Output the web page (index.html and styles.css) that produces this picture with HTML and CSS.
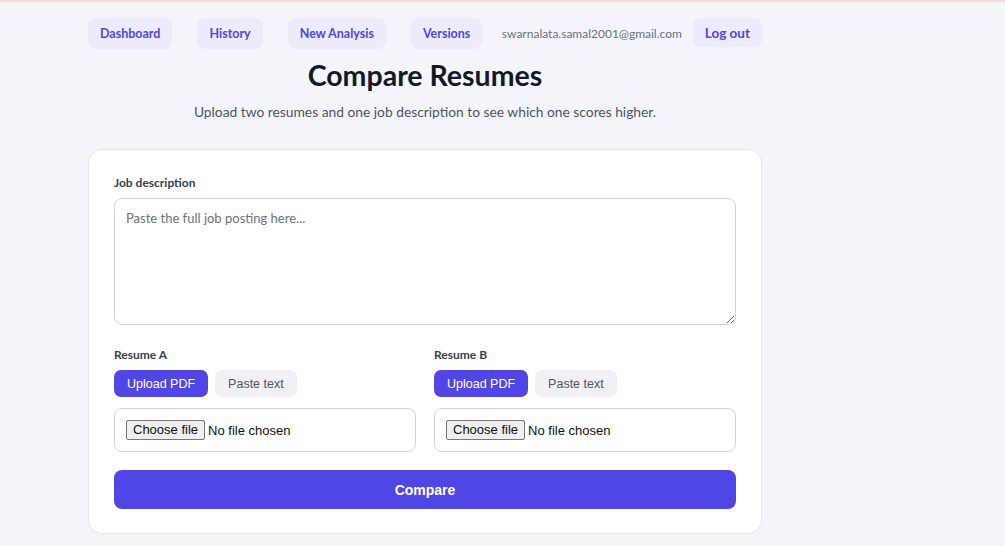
FILE: index.html
```html
<!DOCTYPE html>
<html lang="en">
<head>
  <meta charset="UTF-8">
  <meta name="viewport" content="width=device-width, initial-scale=1.0">
  <title>Compare Resumes</title>
  <link rel="stylesheet" href="styles.css">
</head>
<body>
  <div class="page">
    <!-- Top navigation -->
    <nav class="topbar">
      <div class="nav-links">
        <a class="nav-btn" href="#">Dashboard</a>
        <a class="nav-btn" href="#">History</a>
        <a class="nav-btn" href="#">New Analysis</a>
        <a class="nav-btn" href="#">Versions</a>
      </div>
      <div class="account">
        <span class="email">swarnalata.samal2001@gmail.com</span>
        <button class="logout">Log out</button>
      </div>
    </nav>

    <header class="heading">
      <h1>Compare Resumes</h1>
      <p>Upload two resumes and one job description to see which one scores higher.</p>
    </header>

    <!-- Compare form -->
    <form class="card">
      <label class="field-label" for="jd">Job description</label>
      <textarea id="jd" placeholder="Paste the full job posting here..."></textarea>

      <div class="resumes">
        <div class="resume">
          <div class="field-label">Resume A</div>
          <div class="toggle">
            <button type="button" class="tab active">Upload PDF</button>
            <button type="button" class="tab">Paste text</button>
          </div>
          <label class="file-box">
            <input type="file" accept=".pdf">
            <span class="file-btn">Choose file</span>
            <span class="file-name">No file chosen</span>
          </label>
        </div>
        <div class="resume">
          <div class="field-label">Resume B</div>
          <div class="toggle">
            <button type="button" class="tab active">Upload PDF</button>
            <button type="button" class="tab">Paste text</button>
          </div>
          <label class="file-box">
            <input type="file" accept=".pdf">
            <span class="file-btn">Choose file</span>
            <span class="file-name">No file chosen</span>
          </label>
        </div>
      </div>

      <button type="button" class="submit">Compare</button>
    </form>
  </div>
</body>
</html>
```

FILE: styles.css
```css
* {
  margin: 0;
  padding: 0;
  box-sizing: border-box;
}
html, body {
  height: 100%;
}
body {
  background: #f4f5fb;
  border-top: 2px solid #f6d9d4;
  font-family: Lato, "Open Sans", sans-serif;
  color: #1f2937;
  overflow: hidden;
}
.page {
  width: 674px;
  margin-left: 88px;
}

/* Navigation */
.topbar {
  display: flex;
  align-items: center;
  justify-content: space-between;
  padding-top: 16px;
}
.nav-links {
  display: flex;
  gap: 25px;
}
.nav-btn {
  display: inline-block;
  padding: 0 12px;
  height: 31px;
  line-height: 31px;
  border-radius: 8px;
  background: #ebebfb;
  color: #4f46e5;
  font-size: 12.5px;
  font-weight: 700;
  text-decoration: none;
  white-space: nowrap;
}
.account {
  display: flex;
  align-items: center;
  gap: 11px;
}
.email {
  font-size: 12px;
  color: #6b7280;
  white-space: nowrap;
}
.logout {
  height: 29px;
  padding: 0 12px;
  border: none;
  border-radius: 8px;
  background: #ebebfb;
  color: #4f46e5;
  font-family: inherit;
  font-size: 13.5px;
  font-weight: 700;
  margin-bottom: 2px;
  white-space: nowrap;
}

/* Heading */
.heading {
  text-align: center;
  margin-top: 8px;
}
.heading h1 {
  font-size: 28.5px;
  font-weight: 700;
  color: #111827;
  line-height: 36px;
}
.heading p {
  margin-top: 10px;
  font-size: 13.8px;
  color: #4b5563;
}

/* Card */
.card {
  margin-top: 29px;
  background: #fff;
  border: 1px solid #e5e7eb;
  border-radius: 14px;
  padding: 25px 25px 24px;
}
.field-label {
  display: block;
  font-size: 12px;
  line-height: 16px;
  font-weight: 700;
  color: #374151;
  margin-bottom: 7px;
}
textarea {
  display: block;
  width: 100%;
  height: 127px;
  padding: 11px 11px;
  border: 1px solid #d1d5db;
  border-radius: 8px;
  font-family: inherit;
  font-size: 13px;
  resize: vertical;
}
textarea::placeholder {
  color: #6b7280;
}
.resumes {
  display: grid;
  grid-template-columns: 1fr 1fr;
  gap: 18px;
  margin-top: 22px;
}
.toggle {
  display: flex;
  gap: 7px;
  margin-bottom: 11px;
}
.tab {
  height: 27px;
  padding: 0 13px;
  border: none;
  border-radius: 7px;
  background: #f0f0f7;
  color: #4b5563;
  font-family: "Liberation Sans", Arial, sans-serif;
  font-size: 12.5px;
}
.tab.active {
  background: #4f46e5;
  color: #fff;
}

/* File picker: native input hidden, label drawn instead */
.file-box {
  height: 44px;
  display: flex;
  align-items: center;
  gap: 3px;
  padding: 0 11px;
  border: 1px solid #d1d5db;
  border-radius: 8px;
  font-family: "Liberation Sans", Arial, sans-serif;
  font-size: 13px;
  color: #111;
}
.file-box input {
  display: none;
}
.file-btn {
  height: 20px;
  line-height: 18px;
  padding: 0 6px;
  background: #efefef;
  border: 1px solid #767676;
  border-radius: 2px;
}
.submit {
  display: block;
  width: 100%;
  height: 39px;
  margin-top: 18px;
  border: none;
  border-radius: 8px;
  background: #4f46e5;
  color: #fff;
  font-family: "Liberation Sans", Arial, sans-serif;
  font-size: 14px;
  font-weight: 700;
}
```
